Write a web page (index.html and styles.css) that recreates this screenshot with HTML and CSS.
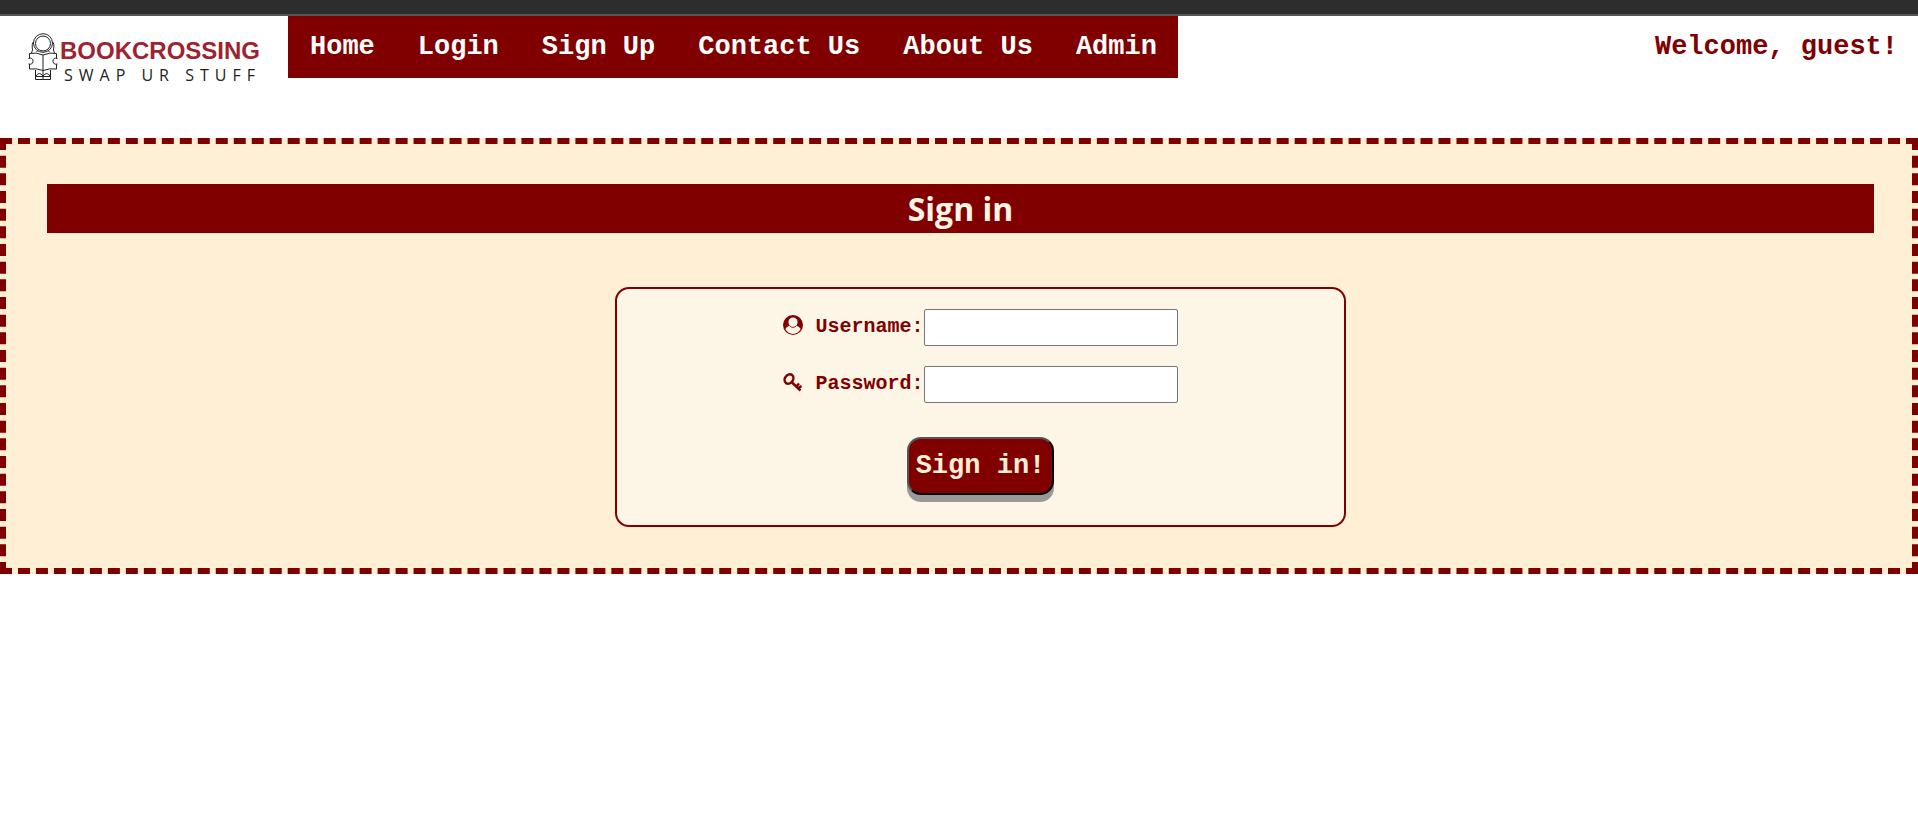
FILE: index.html
```html
<!DOCTYPE html>
<html lang="en">
<head>
<meta charset="utf-8">
<title>Bookcrossing - Sign in</title>
<link rel="stylesheet" href="styles.css">
</head>
<body>
<div class="topbar"></div>
<header class="header">
  <a class="logo" href="#">
    <svg class="logo-mark" viewBox="0 0 30 48" width="30" height="48" fill="none" stroke="#222" stroke-width="1" aria-hidden="true">
      <ellipse cx="15" cy="10" rx="9.5" ry="9.3"/>
      <ellipse cx="15" cy="10.5" rx="7.5" ry="7.5"/>
      <path d="M5.500 9Q3.500 10 4.500 17L3.500 20M24.500 9Q26.500 10 25.500 17L26.500 20M9 18V19M21 18V19"/>
      <path d="M15 22Q8 19 1.500 20.500V36Q8 35 15 37.500Q22 35 28.500 36V20.500Q22 19 15 22V37.500" fill="#fff"/>
      <path d="M.5 25.500Q5 24 5 28.500Q4.500 32 .5 31M29.500 25.500Q25 24 25 28.500Q25.500 32 29.500 31" fill="#fff"/>
      <path d="M7.500 37V46.500H22.500V37M15 38V46.500M8 43Q11 38 15 43Q19 38 22 43M7.500 43.500H22.500"/>
    </svg>
    <span class="logo-text">
      <span class="logo-name">BOOKCROSSING</span>
      <span class="logo-tag">SWAP UR STUFF</span>
    </span>
  </a>
  <nav class="nav">
    <a href="#">Home</a>
    <a href="#">Login</a>
    <a href="#">Sign Up</a>
    <a href="#">Contact Us</a>
    <a href="#">About Us</a>
    <a href="#">Admin</a>
  </nav>
  <p class="welcome">Welcome, guest!</p>
</header>
<main class="panel">
  <h1 class="title">Sign in</h1>
  <form class="form">
    <div class="row">
      <svg class="icon" viewBox="0 0 20 20" width="20" height="20" aria-hidden="true">
        <circle cx="10" cy="10" r="10" fill="#800000"/>
        <path d="M2.300 14Q3.500 11.500 6.500 10.700Q5 8.500 5.500 6Q6.500 2.500 10 2.500T14.500 6Q15 8.500 13.500 10.700Q16.500 11.500 17.700 14Q15 18.900 10 18.900T2.300 14Z" fill="#fdf5e6"/>
        <path d="M6.500 10.700Q10 14 13.500 10.700" fill="none" stroke="#800000" stroke-width=".9"/>
      </svg>
      <label for="username">Username:</label>
      <input id="username" type="text">
    </div>
    <div class="row">
      <svg class="icon" viewBox="0 0 20 20" width="20" height="20" fill="none" stroke="#800000" stroke-width="2.5" aria-hidden="true">
        <ellipse cx="6" cy="7" rx="4" ry="5" transform="rotate(38 6 7)"/>
        <path d="M8.500 10L17.500 18.500M13.500 14.500L16 11.500M15.500 16L18.500 14"/>
      </svg>
      <label for="password">Password:</label>
      <input id="password" type="password">
    </div>
    <button class="submit" type="submit">Sign in!</button>
  </form>
</main>
</body>
</html>
```
FILE: styles.css
```css
* {
  box-sizing: border-box;
}

body {
  margin: 0;
  background: #fff;
  color: #800000;
  font-family: "Liberation Mono", "Courier New", monospace;
  font-weight: bold;
}

.topbar {
  height: 16px;
  background: #2d2d2d;
  border-bottom: 2px solid #555;
}

.header {
  display: flex;
  align-items: flex-start;
  padding-bottom: 38px;
}

.logo {
  display: flex;
  width: 288px;
  padding: 17px 0 0 28px;
  text-decoration: none;
}

.logo-mark {
  flex: none;
}

.logo-text {
  display: flex;
  flex-direction: column;
  padding-left: 2px;
}

.logo-name {
  color: #9b2430;
  font: bold 24px/36px "Liberation Sans", sans-serif;
}

.logo-tag {
  padding-left: 4px;
  color: #222;
  font: 16px/12px "Open Sans", sans-serif;
  letter-spacing: 6px;
  white-space: nowrap;
}

.nav {
  display: flex;
  margin-bottom: 22px;
  background: #800000;
}

.nav a {
  padding: 0 21px 0 22px;
  color: #fff;
  font-size: 27px;
  line-height: 62px;
  text-decoration: none;
  white-space: nowrap;
}

.welcome {
  margin: 0 20px 0 auto;
  font-size: 27px;
  line-height: 62px;
}

.panel {
  padding: 40px 38px 41px 41px;
  border: 6px dashed #800000;
  background: #ffefd5;
}

.title {
  margin: 0;
  background: #800000;
  color: #fdf5e6;
  font: bold 32px/49px "Open Sans", sans-serif;
  text-align: center;
}

.form {
  display: flex;
  flex-direction: column;
  align-items: center;
  gap: 20px;
  width: 40%;
  margin: 54px 0 0 calc(30% + 20px);
  padding: 20px 0 30px;
  border: 2px solid #800000;
  border-radius: 14px;
  background: #fdf5e6;
}

.row {
  display: flex;
  align-items: flex-start;
  font-size: 20px;
  line-height: 36px;
}

.icon {
  margin: 6px 12px 0 0;
}

.row input {
  width: 254px;
  height: 37px;
  padding: 1px 6px;
  border: 1px solid #767676;
  border-radius: 2px;
  background: #fff;
  font: inherit;
}

.submit {
  height: 58px;
  margin-top: 14px;
  padding: 0 7px;
  border: 2px outset #000;
  border-radius: 14px;
  background: #800000;
  box-shadow: 0 7px #999;
  color: #ffefd5;
  font: inherit;
  font-size: 27px;
}
```
